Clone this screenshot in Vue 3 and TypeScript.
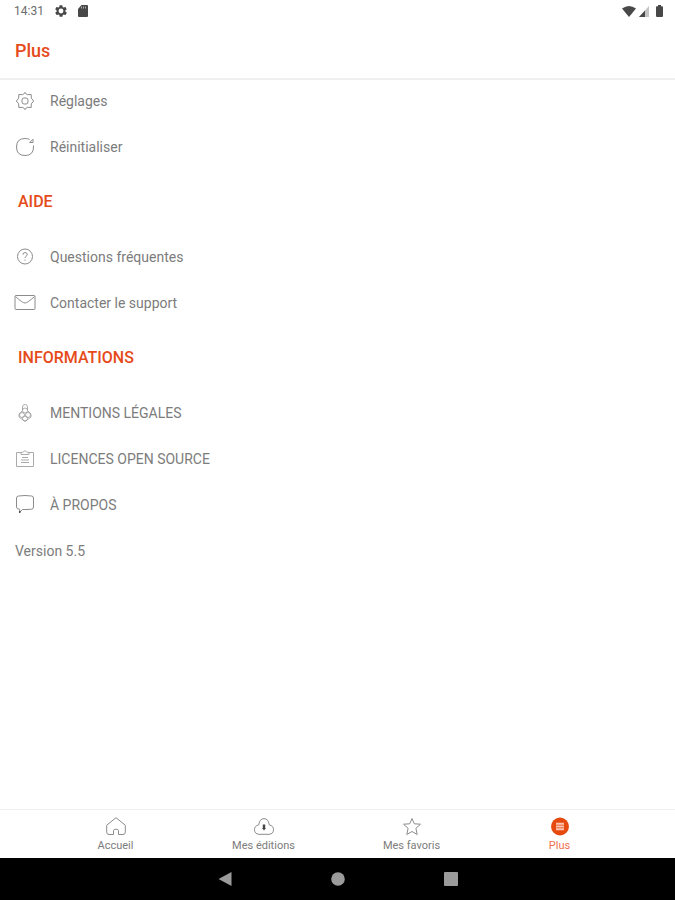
<script setup lang="ts">
import { ref } from 'vue'

type IconName = 'gear' | 'reset' | 'help' | 'mail' | 'legal' | 'licence' | 'chat'
interface Row { icon: IconName; label: string }
interface Section { title?: string; rows: Row[] }
interface Tab { icon: 'home' | 'cloud' | 'star' | 'more'; label: string }

const sections: Section[] = [
  {
    rows: [
      { icon: 'gear', label: 'Réglages' },
      { icon: 'reset', label: 'Réinitialiser' },
    ],
  },
  {
    title: 'AIDE',
    rows: [
      { icon: 'help', label: 'Questions fréquentes' },
      { icon: 'mail', label: 'Contacter le support' },
    ],
  },
  {
    title: 'INFORMATIONS',
    rows: [
      { icon: 'legal', label: 'MENTIONS LÉGALES' },
      { icon: 'licence', label: 'LICENCES OPEN SOURCE' },
      { icon: 'chat', label: 'À PROPOS' },
    ],
  },
]

const tabs: Tab[] = [
  { icon: 'home', label: 'Accueil' },
  { icon: 'cloud', label: 'Mes éditions' },
  { icon: 'star', label: 'Mes favoris' },
  { icon: 'more', label: 'Plus' },
]
const active = ref('Plus')
</script>

<template>
  <div class="screen">
    <div class="status">
      <div class="status-group left">
        <span class="clock">14:31</span>
        <svg class="status-icon" width="14" height="14" viewBox="0 0 24 24" aria-hidden="true">
          <path fill="#484848" fill-rule="evenodd" d="M19.4 13c.1-.6.1-1.4 0-2l2.1-1.7c.2-.1.2-.4.1-.6l-2-3.500c-.1-.2-.4-.3-.6-.2l-2.500 1c-.5-.4-1.100-.7-1.700-1l-.4-2.600c0-.3-.2-.4-.5-.4h-4c-.2 0-.4.1-.5.4L9.100 5c-.6.300-1.200.600-1.700 1l-2.500-1c-.2-.1-.5 0-.6.200l-2 3.500c-.1.200 0 .500.100.6L4.600 11c-.1.600-.1 1.400 0 2l-2.100 1.700c-.2.100-.2.400-.1.600l2 3.500c.1.200.4.300.6.200l2.500-1c.5.400 1.100.7 1.700 1l.4 2.600c0 .300.200.4.500.4h4c.2 0 .4-.1.500-.4l.4-2.600c.6-.300 1.200-.600 1.700-1l2.500 1c.2.100.5 0 .6-.2l2-3.500c.1-.2 0-.5-.1-.6zM12 16.200a4.200 4.200 0 1 1 0-8.400 4.200 4.200 0 0 1 0 8.400z" />
        </svg>
        <svg class="status-icon" width="10" height="12" viewBox="0 0 10 12" aria-hidden="true">
          <path fill="#484848" d="M3.500 0H9q1 0 1 1v10q0 1-1 1H1q-1 0-1-1V4z" />
          <path stroke="#aaa" stroke-width="1" d="M3.500 1.500v2M5.500 1.500v2M7.500 1.500v2" />
        </svg>
      </div>
      <div class="status-group right">
        <svg width="14" height="11" viewBox="0 0 14 11" aria-hidden="true">
          <path fill="#484848" d="M0 2.500Q7-2.500 14 2.500L7 11z" />
        </svg>
        <svg width="10" height="11" viewBox="0 0 10 11" aria-hidden="true">
          <path fill="#c4c4c4" d="M10 0v11H0z" />
          <path fill="#484848" d="M6 4.400V11H0z" />
        </svg>
        <svg class="battery" width="7" height="12" viewBox="0 0 7 12" aria-hidden="true">
          <path fill="#484848" d="M2 0h3v1.200h1q1 0 1 1V11q0 1-1 1H1q-1 0-1-1V2.200q0-1 1-1h1z" />
        </svg>
      </div>
    </div>

    <header class="bar"><h1>Plus</h1></header>

    <main class="content">
      <template v-for="(section, i) in sections" :key="i">
        <h2 v-if="section.title">{{ section.title }}</h2>
        <button v-for="row in section.rows" :key="row.label" type="button" class="row">
          <svg class="row-icon" width="22" height="22" viewBox="0 0 22 22" aria-hidden="true">
            <g v-if="row.icon === 'gear'">
              <path d="M11 2.300Q12.300 4.800 13.600 4.700L17.200 4.500 17.300 8.200 19.700 11 17.300 13.800 17.200 17.500 13.600 17.300Q12.300 17.200 11 19.700 9.700 17.200 8.400 17.300L4.800 17.500 4.700 13.800 2.300 11 4.700 8.200 4.800 4.500 8.400 4.700Q9.700 4.800 11 2.300z" />
              <rect x="8" y="8" width="6" height="6" rx="2" />
            </g>
            <g v-else-if="row.icon === 'reset'">
              <path d="M15.500 3.500Q14 2.500 11 2.500 2.500 2.500 2.500 11t8.500 8.500 8.500-8.500V9.500" />
              <path d="M15.500 6.500H19V3.200M15.800 6.300l3-2.800" />
            </g>
            <g v-else-if="row.icon === 'help'">
              <circle cx="11" cy="10.500" r="7.500" />
              <path d="M9 8.700q0-2.200 2.100-2.200t2.100 2q0 1.200-1.100 1.800T11 12M11 13.500v1.200" />
            </g>
            <g v-else-if="row.icon === 'mail'">
              <rect x="1" y="3.500" width="20" height="14" rx="1" />
              <path d="M1.500 4.500Q8.500 11 11 11t9.500-6.500" />
            </g>
            <g v-else-if="row.icon === 'legal'" class="fine">
              <path d="M8.500 8.500V5q0-2.500 2.500-2.500T13.500 5v3.500" />
              <path d="M8.500 8.500L5 12v3l6 4.500 6-4.500v-3l-3.500-3.500" />
              <circle cx="11" cy="8.500" r="2.500" />
              <circle cx="8" cy="13" r="2.500" />
              <circle cx="14" cy="13" r="2.500" />
              <circle cx="11" cy="16.500" r="2.500" />
            </g>
            <g v-else-if="row.icon === 'licence'" class="pale">
              <path d="M7.500 4.500h-5v14h17v-14h-5M7 6.500v-2l2.500-.5L11 2.500 12.500 4l2.500.5v2z" />
              <path d="M8 9.500h6M7 12h8M7 14.500h8" />
            </g>
            <g v-else>
              <path d="M4.500 2Q11 1 17.500 2q2 .2 2 2v9q0 2-2 2.200-4.500.5-9 .3L5.500 18.500l.2-3.200Q2.500 15.100 2.500 13V4q0-1.800 2-2z" />
              <circle class="tail" cx="5.800" cy="18" r=".9" />
            </g>
          </svg>
          <span>{{ row.label }}</span>
        </button>
      </template>
      <p class="version">Version 5.5</p>
    </main>

    <nav class="tabs">
      <div class="tabs-inner">
        <button
          v-for="tab in tabs"
          :key="tab.label"
          type="button"
          class="tab"
          :class="{ active: active === tab.label }"
          @click="active = tab.label"
        >
          <svg class="tab-icon" width="22" height="20" viewBox="0 0 22 20" aria-hidden="true">
            <path v-if="tab.icon === 'home'" d="M8.500 18.500v-3.800q0-1.500 2.500-1.500t2.500 1.500v3.800h4.500q2.300 0 2.300-2.300V9.200L11 1.700 1.700 9.200v7q0 2.300 2.300 2.300z" />
            <g v-else-if="tab.icon === 'cloud'">
              <path d="M5.800 8.800Q6.500 2.800 11 2.600q4.500.2 5.200 6.200 4.300 1 4.300 4.700 0 4.500-4.500 4.800H6q-4.500-.3-4.500-4.800 0-3.700 4.300-4.700z" />
              <path class="arrow" d="M9.800 8.500h2.400V12h.8L11 14.500 9 12h.8z" />
            </g>
            <path v-else-if="tab.icon === 'star'" d="M11 2.500l2.300 5.300 6.200.4-4.600 4.100 1.300 6.200L11 15.500l-5.200 3 1.300-6.200-4.600-4.100 6.200-.4z" />
            <g v-else>
              <circle class="disc" cx="11" cy="10.500" r="9" />
              <path class="lines" d="M7 7.800h8M7 10.500h8M7 13.200h8" />
            </g>
          </svg>
          <span>{{ tab.label }}</span>
        </button>
      </div>
    </nav>

    <div class="system">
      <button type="button" aria-label="Retour">
        <svg width="14" height="16" viewBox="0 0 14 16"><path d="M13.500 1v14L.5 8z" /></svg>
      </button>
      <button type="button" aria-label="Écran d'accueil">
        <svg width="14" height="14" viewBox="0 0 14 14"><circle cx="7" cy="7" r="6.800" /></svg>
      </button>
      <button type="button" aria-label="Applications récentes">
        <svg width="14" height="14" viewBox="0 0 14 14"><rect width="14" height="14" rx="1" /></svg>
      </button>
    </div>
  </div>
</template>

<style>
body {
  margin: 0;
  background: #fff;
}
</style>

<style scoped>
.screen {
  display: flex;
  flex-direction: column;
  min-height: 100vh;
  background: #fff;
  color: #7c7c7c;
  font-family: Roboto, "Liberation Sans", sans-serif;
}
button {
  margin: 0;
  padding: 0;
  border: 0;
  background: none;
  color: inherit;
  font: inherit;
  cursor: pointer;
}
.status {
  display: flex;
  justify-content: space-between;
  align-items: center;
  height: 22px;
  padding: 0 12px 0 14px;
}
.status-group {
  display: flex;
  align-items: center;
}
.left {
  gap: 10px;
}
.right {
  gap: 3px;
}
.battery {
  margin-left: 4px;
}
.clock {
  color: #6c6c6c;
  font-size: 12px;
}
.bar {
  display: flex;
  align-items: center;
  height: 56px;
  padding: 0 15px;
  border-bottom: 2px solid #efefef;
}
h1 {
  margin: 0;
  color: #e64a19;
  font-size: 18px;
  font-weight: 500;
}
.content {
  display: flex;
  flex: 1;
  flex-direction: column;
  gap: 4px;
}
h2 {
  margin: 0;
  padding: 0 18px;
  color: #e64a19;
  font-size: 16px;
  font-weight: 500;
  line-height: 60px;
}
.row {
  display: flex;
  align-items: center;
  gap: 14px;
  height: 42px;
  padding: 0 14px;
  font-size: 14px;
  text-align: left;
}
.row-icon,
.tab-icon {
  fill: none;
  stroke: #8c8c8c;
  stroke-width: 1;
  stroke-linejoin: round;
}
.pale {
  stroke: #aaa;
}
.fine {
  stroke: #9a9a9a;
  stroke-width: 0.8;
}
.tail,
.arrow {
  fill: #444;
  stroke: none;
}
.version {
  margin: 0;
  padding: 0 15px;
  font-size: 14px;
  line-height: 42px;
}
.tabs {
  border-top: 1px solid #f0f0f0;
}
.tabs-inner {
  display: flex;
  max-width: 592px;
  height: 48px;
  margin: 0 auto;
}
.tab {
  display: flex;
  flex: 1;
  flex-direction: column;
  align-items: center;
  justify-content: center;
  gap: 3px;
  font-size: 11px;
  line-height: 14px;
}
.active {
  color: #f0714e;
}
.disc {
  fill: #e64a0f;
  stroke: none;
}
.lines {
  stroke: #ffc4b0;
  stroke-width: 2;
}
.system {
  display: flex;
  justify-content: center;
  height: 42px;
  background: #000;
}
.system button {
  display: flex;
  flex: 0 1 113px;
  align-items: center;
  justify-content: center;
}
.system svg {
  fill: #9b9b9b;
}
</style>
